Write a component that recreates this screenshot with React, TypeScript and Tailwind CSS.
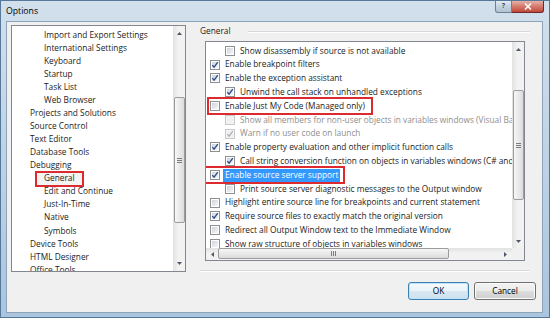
type TreeItem = { t: string; l: 1 | 2; sel?: boolean };

const tree: TreeItem[] = [
  { t: "Import and Export Settings", l: 2 },
  { t: "International Settings", l: 2 },
  { t: "Keyboard", l: 2 },
  { t: "Startup", l: 2 },
  { t: "Task List", l: 2 },
  { t: "Web Browser", l: 2 },
  { t: "Projects and Solutions", l: 1 },
  { t: "Source Control", l: 1 },
  { t: "Text Editor", l: 1 },
  { t: "Database Tools", l: 1 },
  { t: "Debugging", l: 1 },
  { t: "General", l: 2, sel: true },
  { t: "Edit and Continue", l: 2 },
  { t: "Just-In-Time", l: 2 },
  { t: "Native", l: 2 },
  { t: "Symbols", l: 2 },
  { t: "Device Tools", l: 1 },
  { t: "HTML Designer", l: 1 },
  { t: "Office Tools", l: 1 },
];

type Opt = { t: string; l: 0 | 1; on?: boolean; off?: boolean; mark?: boolean; sel?: boolean };

const opts: Opt[] = [
  { t: "Show disassembly if source is not available", l: 1 },
  { t: "Enable breakpoint filters", l: 0, on: true },
  { t: "Enable the exception assistant", l: 0, on: true },
  { t: "Unwind the call stack on unhandled exceptions", l: 1, on: true },
  { t: "Enable Just My Code (Managed only)", l: 0, mark: true },
  { t: "Show all members for non-user objects in variables windows (Visual Basic only)", l: 1, off: true },
  { t: "Warn if no user code on launch", l: 1, on: true, off: true },
  { t: "Enable property evaluation and other implicit function calls", l: 0, on: true },
  { t: "Call string conversion function on objects in variables windows (C# and JavaScript only)", l: 1, on: true },
  { t: "Enable source server support", l: 0, on: true, sel: true },
  { t: "Print source server diagnostic messages to the Output window", l: 1 },
  { t: "Highlight entire source line for breakpoints and current statement", l: 0 },
  { t: "Require source files to exactly match the original version", l: 0, on: true },
  { t: "Redirect all Output Window text to the Immediate Window", l: 0 },
  { t: "Show raw structure of objects in variables windows", l: 0 },
];

function Tri({ d }: { d: "u" | "d" | "l" | "r" }) {
  if (d === "u" || d === "d") {
    return (
      <svg width="5" height="3" viewBox="0 0 5 3">
        <path d={d === "u" ? "M0 3 L2.5 0 L5 3Z" : "M0 0 L2.5 3 L5 0Z"} fill="#4f5866" />
      </svg>
    );
  }
  return (
    <svg width="3" height="5" viewBox="0 0 3 5">
      <path d={d === "l" ? "M3 0 L0 2.5 L3 5Z" : "M0 0 L3 2.5 L0 5Z"} fill="#4f5866" />
    </svg>
  );
}

function Grip({ vert }: { vert?: boolean }) {
  return vert ? (
    <div className="flex flex-col gap-[1px]">
      <div className="h-[1px] w-[5px] bg-[#7d7d7d]" />
      <div className="h-[1px] w-[5px] bg-[#7d7d7d]" />
      <div className="h-[1px] w-[5px] bg-[#7d7d7d]" />
    </div>
  ) : (
    <div className="flex gap-[1px]">
      <div className="h-[5px] w-[1px] bg-[#7d7d7d]" />
      <div className="h-[5px] w-[1px] bg-[#7d7d7d]" />
      <div className="h-[5px] w-[1px] bg-[#7d7d7d]" />
    </div>
  );
}

function Check({ on, off }: { on?: boolean; off?: boolean }) {
  return (
    <span
      className={
        off
          ? "flex h-[10px] w-[10px] shrink-0 items-center justify-center border border-[#c9c9c9] bg-[#f4f4f4]"
          : "flex h-[10px] w-[10px] shrink-0 items-center justify-center border border-[#8e8f8f] bg-white"
      }
    >
      <span
        className={
          off
            ? "flex h-[6px] w-[6px] items-center justify-center bg-[#f0f0f0]"
            : "flex h-[6px] w-[6px] items-center justify-center bg-[linear-gradient(135deg,#cfd4da,#f6f7f8)]"
        }
      >
        {on && (
          <svg width="8" height="8" viewBox="0 0 8 8" className="shrink-0">
            <path
              d="M1.3 4.1 L3.1 6.2 L6.8 1.2"
              fill="none"
              stroke={off ? "#acb2bb" : "#2d4c8f"}
              strokeWidth="1.4"
            />
          </svg>
        )}
      </span>
    </span>
  );
}

export default function App() {
  return (
    <div className="flex h-[318px] w-[550px] flex-col overflow-hidden border border-[#56799b] bg-[linear-gradient(to_bottom,#d2e0ec,#c0d4e6_45%,#aac5de)] font-['Open_Sans',sans-serif] text-[8.3px] text-[#1b1b1b]">
      {/* title bar */}
      <div className="flex h-[20px] shrink-0 items-start justify-between pl-[5px] pr-[5px]">
        <span className="pt-[4px] text-[8.7px] text-black">Options</span>
        <div className="flex">
          <div className="flex h-[12px] w-[17px] items-center justify-center rounded-bl-[3px] border border-t-0 border-[#6f7f90] bg-[linear-gradient(to_bottom,#e3ebf2,#c3d1de_50%,#b4c4d4)] text-[7px] font-bold text-[#3d4e60]">
            ?
          </div>
          <div className="flex h-[12px] w-[32px] items-center justify-center rounded-br-[3px] border border-l-0 border-t-0 border-[#6b2b2b] bg-[linear-gradient(to_bottom,#e8b1a6,#d47a6c_50%,#c2463a)]">
            <svg width="8" height="7" viewBox="0 0 8 7">
              <path d="M1 0.5 L7 6.5 M7 0.5 L1 6.5" stroke="white" strokeWidth="1.6" />
            </svg>
          </div>
        </div>
      </div>

      {/* client area */}
      <div className="ml-[5px] mr-[6px] flex h-[292px] flex-col border border-[#8fa3b8] bg-[#f0f0f0]">
        <div className="flex pl-[4px] pt-[3px]">
          {/* tree */}
          <div className="flex h-[247px] w-[175px] border border-[#828790] bg-white">
            <div className="flex-1 overflow-hidden pt-[2.5px]">
              {tree.map((it) => (
                <div
                  key={it.t}
                  className={
                    it.l === 1
                      ? "flex h-[13.05px] items-center whitespace-nowrap pl-[18px]"
                      : "flex h-[13.05px] items-center whitespace-nowrap pl-[32px]"
                  }
                >
                  {it.sel ? (
                    <span className="-ml-[7px] flex h-[12px] items-center bg-[#f3f3f3] px-[7px] outline-2 outline-[#dc2a2f]">
                      {it.t}
                    </span>
                  ) : (
                    <span>{it.t}</span>
                  )}
                </div>
              ))}
            </div>
            <div className="flex w-[12px] flex-col bg-[linear-gradient(to_right,#e2e2e2,#f2f2f2_45%,#f2f2f2)]">
              <div className="flex h-[15px] items-center justify-center">
                <Tri d="u" />
              </div>
              <div className="flex-1">
                <div className="mx-auto mt-[56px] flex h-[126px] w-[11px] items-center justify-center rounded-[2px] border border-[#9c9c9c] bg-[linear-gradient(to_right,#f7f7f7,#dcdcdc)]">
                  <Grip vert />
                </div>
              </div>
              <div className="flex h-[15px] items-center justify-center">
                <Tri d="d" />
              </div>
            </div>
          </div>

          {/* right panel */}
          <div className="ml-[14px] flex h-[247px] w-[330px] flex-col">
            <div className="flex h-[15px] items-center">
              <span>General</span>
              <div className="ml-[17px] flex-1 border-t border-b border-t-[#d5d9de] border-b-white" />
            </div>
            <div className="ml-[5px] mt-[3px] flex h-[220px] w-[320px] flex-col border border-[#828790] bg-white">
              <div className="flex h-[206px]">
                <div className="flex-1 overflow-hidden pt-[2px]">
                  {opts.map((o) => (
                    <div
                      key={o.t}
                      className={
                        o.l === 0
                          ? "flex h-[13.8px] items-center whitespace-nowrap pl-[4px]"
                          : "flex h-[13.8px] items-center whitespace-nowrap pl-[19px]"
                      }
                    >
                      {o.mark ? (
                        <span className="-ml-[1px] flex h-[14px] items-center gap-[3px] pl-[1px] pr-[4px] outline-2 outline-[#dc2a2f]">
                          <Check on={o.on} off={o.off} />
                          <span className="px-[2px]">{o.t}</span>
                        </span>
                      ) : o.sel ? (
                        <span className="-ml-[6px] flex h-[14px] items-center gap-[3px] pl-[6px] pr-[3px] outline-2 outline-[#dc2a2f]">
                          <Check on={o.on} off={o.off} />
                          <span className="flex h-[13px] items-center bg-[#3399ff] px-[2px] text-white">{o.t}</span>
                        </span>
                      ) : (
                        <span className="flex items-center gap-[3px]">
                          <Check on={o.on} off={o.off} />
                          <span className={o.off ? "px-[2px] text-[#8e8e8e]" : "px-[2px]"}>{o.t}</span>
                        </span>
                      )}
                    </div>
                  ))}
                </div>
                <div className="flex w-[12px] flex-col bg-[linear-gradient(to_right,#e2e2e2,#f2f2f2_45%,#f2f2f2)]">
                  <div className="flex h-[14px] items-center justify-center">
                    <Tri d="u" />
                  </div>
                  <div className="flex-1">
                    <div className="mx-auto mt-[34px] flex h-[110px] w-[11px] items-center justify-center rounded-[2px] border border-[#9c9c9c] bg-[linear-gradient(to_right,#f7f7f7,#dcdcdc)]">
                      <Grip vert />
                    </div>
                  </div>
                  <div className="flex h-[14px] items-center justify-center">
                    <Tri d="d" />
                  </div>
                </div>
              </div>
              <div className="flex h-[12px]">
                <div className="flex flex-1 bg-[linear-gradient(to_bottom,#e2e2e2,#f2f2f2_45%,#f2f2f2)]">
                  <div className="flex w-[12px] items-center justify-center">
                    <Tri d="l" />
                  </div>
                  <div className="flex-1">
                    <div className="my-auto flex h-[11px] w-[231px] items-center justify-center rounded-[2px] border border-[#9c9c9c] bg-[linear-gradient(to_bottom,#f7f7f7,#dcdcdc)]">
                      <Grip />
                    </div>
                  </div>
                  <div className="flex w-[13px] items-center justify-center">
                    <Tri d="r" />
                  </div>
                </div>
                <div className="w-[12px] bg-[#f0f0f0]" />
              </div>
            </div>
            <div className="mt-[9px] border-t border-b border-t-[#d5d9de] border-b-white" />
          </div>
        </div>

        {/* buttons */}
        <div className="mt-[10px] flex justify-end gap-[5px] pr-[6px]">
          <button className="flex h-[18px] w-[61px] items-center justify-center rounded-[3px] border border-[#3c7fb1] bg-[linear-gradient(to_bottom,#f6fbfe,#eaf3f9_50%,#d9e8f2_50%,#cde1ee)] shadow-[inset_0_0_0_1px_#bfe3f7] text-[8.3px] text-black">
            OK
          </button>
          <button className="flex h-[18px] w-[62px] items-center justify-center rounded-[3px] border border-[#707070] bg-[linear-gradient(to_bottom,#f2f2f2,#ebebeb_50%,#dddddd_50%,#cfcfcf)] shadow-[inset_0_0_0_1px_#fbfbfb] text-[8.3px] text-black">
            Cancel
          </button>
        </div>
      </div>
    </div>
  );
}
